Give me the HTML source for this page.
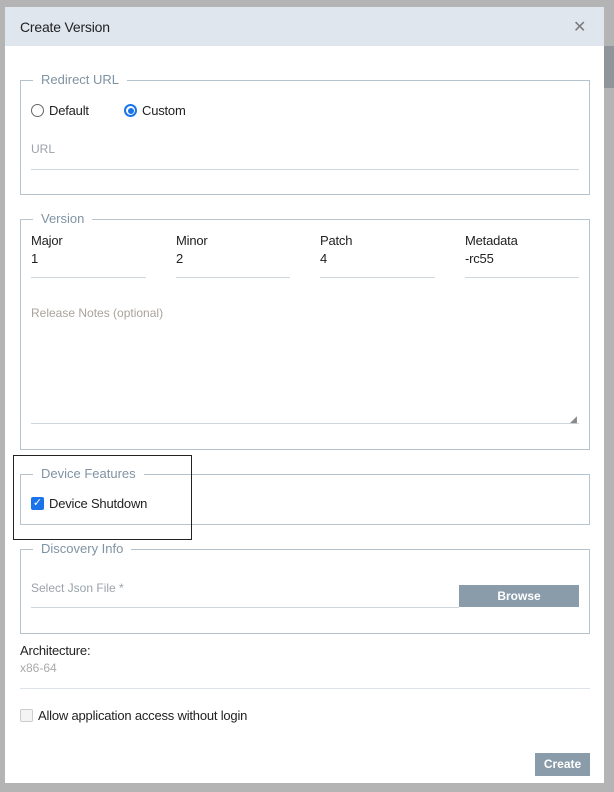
<!DOCTYPE html>
<html><head><style>
*{box-sizing:border-box;margin:0;padding:0}
body{width:614px;height:792px;background:#b4b4b4;font-family:"Liberation Sans",sans-serif;position:relative;overflow:hidden;font-size:13px;color:#222}
.a{position:absolute}
.dlg{left:5px;top:7px;width:599px;height:776px;background:#fff}
.hdr{left:5px;top:7px;width:599px;height:39px;background:#dfe6ee}
.lg{position:absolute;background:#fff;color:#7f93a3;font-size:13px;padding:0 8px}
.ul{position:absolute;height:1px;background:#cfd6dc}
.lbl{position:absolute;font-size:13px;color:#222;letter-spacing:-0.2px}
.ph{position:absolute;font-size:12px;color:#9aa3aa}
</style></head><body>
<div class="a" style="left:604px;top:46px;width:10px;height:42px;background:#8f959a"></div>
<div class="a dlg"></div>
<div class="a hdr"></div>
<div class="a" style="left:20px;top:19px;font-size:14px;color:#222;letter-spacing:-0.2px">Create Version</div>
<div class="a" style="left:573px;top:17px;font-size:16px;color:#7a7a7a">✕</div>

<div class="a" style="left:20px;top:80px;width:570px;height:115px;border:1px solid #b5c3cf"></div>
<div class="lg" style="left:33px;top:72px">Redirect URL</div>
<div class="a" style="left:31px;top:104px;width:13px;height:13px;border:1px solid #666;border-radius:50%"></div>
<div class="lbl" style="left:49px;top:103px">Default</div>
<div class="a" style="left:124px;top:104px;width:13px;height:13px;border:2px solid #1a73e8;border-radius:50%"><div style="margin:1.5px;width:6px;height:6px;background:#1a73e8;border-radius:50%"></div></div>
<div class="lbl" style="left:142px;top:103px">Custom</div>
<div class="ph" style="left:31px;top:142px">URL</div>
<div class="ul" style="left:31px;top:169px;width:548px"></div>

<div class="a" style="left:20px;top:219px;width:570px;height:231px;border:1px solid #b5c3cf"></div>
<div class="lg" style="left:33px;top:211px">Version</div>
<div class="lbl" style="left:31px;top:233px">Major</div><div class="lbl" style="left:31px;top:251px">1</div><div class="ul" style="left:31px;top:277px;width:115px"></div>
<div class="lbl" style="left:176px;top:233px">Minor</div><div class="lbl" style="left:176px;top:251px">2</div><div class="ul" style="left:176px;top:277px;width:114px"></div>
<div class="lbl" style="left:320px;top:233px">Patch</div><div class="lbl" style="left:320px;top:251px">4</div><div class="ul" style="left:320px;top:277px;width:115px"></div>
<div class="lbl" style="left:465px;top:233px">Metadata</div><div class="lbl" style="left:465px;top:251px">-rc55</div><div class="ul" style="left:465px;top:277px;width:114px"></div>
<div class="ph" style="left:31px;top:306px;color:#a9a39c">Release Notes (optional)</div>
<div class="ul" style="left:31px;top:423px;width:548px"></div>
<div class="a" style="left:570px;top:414px;font-size:9px;color:#888">◢</div>

<div class="a" style="left:20px;top:474px;width:570px;height:51px;border:1px solid #b5c3cf"></div>
<div class="lg" style="left:33px;top:466px">Device Features</div>
<div class="a" style="left:31px;top:497px;width:13px;height:13px;background:#1a73e8;border-radius:2px;color:#fff;font-size:11px;line-height:13px;text-align:center">✓</div>
<div class="lbl" style="left:49px;top:496px">Device Shutdown</div>
<div class="a" style="left:13px;top:455px;width:179px;height:85px;border:1px solid #222"></div>

<div class="a" style="left:20px;top:549px;width:570px;height:85px;border:1px solid #b5c3cf"></div>
<div class="lg" style="left:33px;top:541px">Discovery Info</div>
<div class="ph" style="left:31px;top:581px">Select Json File *</div>
<div class="ul" style="left:31px;top:607px;width:428px"></div>
<div class="a" style="left:459px;top:585px;width:120px;height:22px;background:#8a9caa;color:#fff;font-weight:bold;font-size:12px;text-align:center;line-height:22px">Browse</div>

<div class="lbl" style="left:20px;top:643px">Architecture:</div>
<div class="ph" style="left:20px;top:661px;color:#aaa">x86-64</div>
<div class="ul" style="left:20px;top:688px;width:570px;background:#dde3e8"></div>
<div class="a" style="left:20px;top:709px;width:13px;height:13px;border:1px solid #ccc;border-radius:2px;background:#f4f4f4"></div>
<div class="lbl" style="left:38px;top:708px">Allow application access without login</div>
<div class="a" style="left:535px;top:753px;width:55px;height:23px;background:#8a9caa;color:#fff;font-weight:bold;font-size:12px;text-align:center;line-height:23px">Create</div>
</body></html>
